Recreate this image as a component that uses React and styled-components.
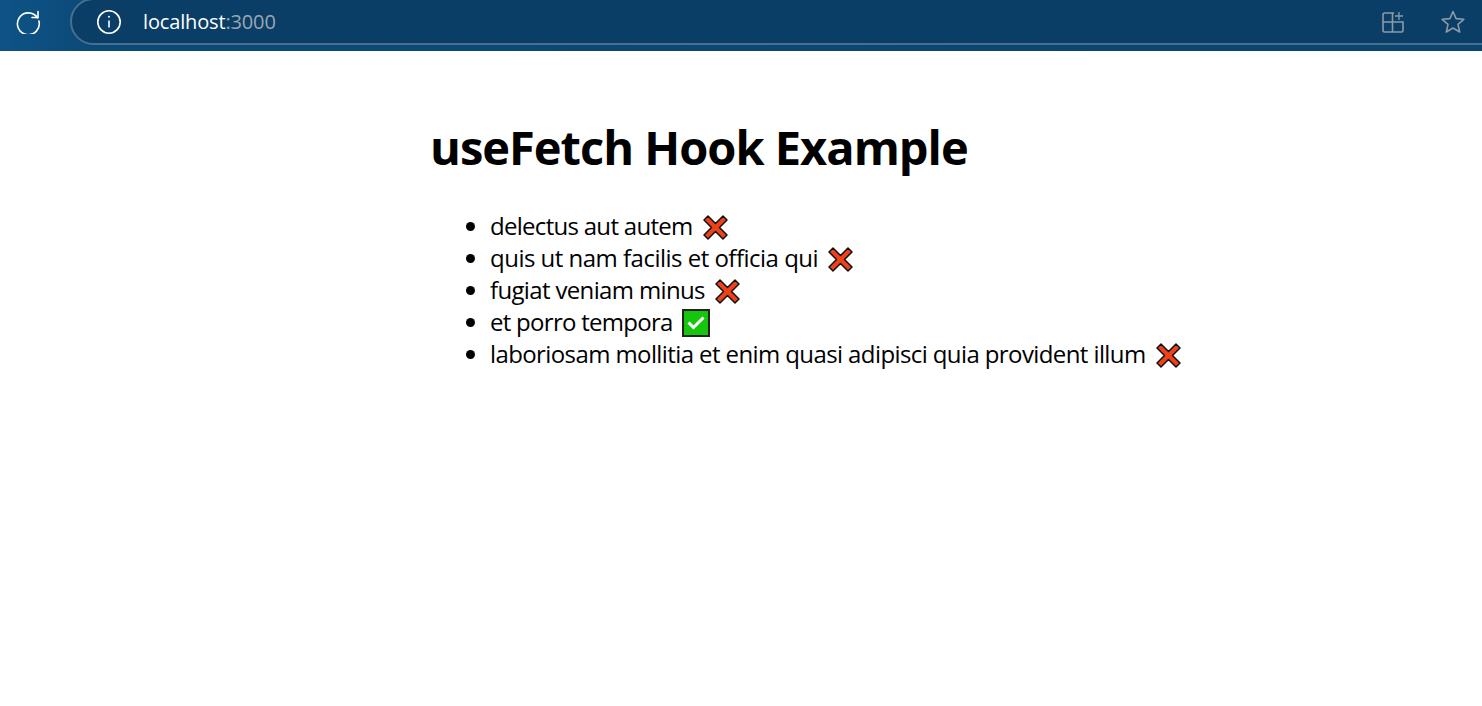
import React from "react";
import styled, { createGlobalStyle } from "styled-components";

const GlobalStyle = createGlobalStyle`
    html, body {
        margin: 0;
        padding: 0;
        background: #fff;
        font-family: "Open Sans", "Noto Sans", sans-serif;
    }
`;

const todos = [
    { title: "delectus aut autem", done: false, tracking: -0.71 },
    { title: "quis ut nam facilis et officia qui", done: false, tracking: -0.51 },
    { title: "fugiat veniam minus", done: false, tracking: -0.65 },
    { title: "et porro tempora", done: true, tracking: -0.72 },
    { title: "laboriosam mollitia et enim quasi adipisci quia provident illum", done: false, tracking: -0.6 },
];

function CrossMark() {
    return (
        <MarkSvg width="25" height="27" viewBox="0 0 25 27">
            <path
                d="M5 2 L12.5 9.5 L20 2 L24 6 L16.5 13.5 L24 21 L20 25 L12.5 17.5 L5 25 L1 21 L8.5 13.5 L1 6 Z"
                fill="#ee4119"
                stroke="#111"
                strokeWidth="1.5"
                strokeLinejoin="round"
            />
        </MarkSvg>
    );
}

function CheckMark() {
    return (
        <MarkSvg $gap={9} width="28" height="28" viewBox="0 0 28 28">
            <rect x="1" y="1" width="26" height="26" fill="#16c60c" stroke="#222" strokeWidth="2" />
            <path d="M6.5 13.5 L11.5 18.5 L21.5 8.5" fill="none" stroke="#fff" strokeWidth="3" />
        </MarkSvg>
    );
}

function App() {
    return (
        <>
            <GlobalStyle />
            <BrowserBar>
                <ReloadButton>
                    <svg width="26" height="26" viewBox="0 0 26 26" fill="none" stroke="#fff" strokeWidth="1.6">
                        <path d="M22.6 10 A10.9 10.9 0 1 0 23.9 13" strokeLinecap="round" />
                        <path d="M23 3.5 V9.5 H17" strokeLinecap="round" strokeLinejoin="round" />
                    </svg>
                </ReloadButton>
                <AddressBar>
                    <InfoIcon>
                        <svg width="26" height="26" viewBox="0 0 26 26" fill="none" stroke="#fff" strokeWidth="1.6">
                            <circle cx="13" cy="13" r="11.2" />
                            <path d="M13 11.5 V18.5" />
                            <circle cx="13" cy="7.8" r="1" fill="#fff" stroke="none" />
                        </svg>
                    </InfoIcon>
                    <Url>
                        localhost<Port>:3000</Port>
                    </Url>
                    <BarActions>
                        <svg width="24" height="24" viewBox="0 0 24 24" fill="none" stroke="#8c9aa6" strokeWidth="1.6">
                            <path d="M13 3 H3.5 A1.5 1.5 0 0 0 2 4.5 V20.5 A1.5 1.5 0 0 0 3.5 22 H20.5 A1.5 1.5 0 0 0 22 20.5 V12 H2 M11.5 3 V22" />
                            <path d="M18 2 V10 M14 6 H22" strokeWidth="1.3" />
                        </svg>
                        <svg width="26" height="26" viewBox="0 0 26 26" fill="none" stroke="#8c9aa6" strokeWidth="1.6" strokeLinejoin="round">
                            <path d="M13 2.5 L16.1 9.6 L23.8 10.3 L18 15.4 L19.7 23 L13 19 L6.3 23 L8 15.4 L2.2 10.3 L9.9 9.6 Z" />
                        </svg>
                    </BarActions>
                </AddressBar>
            </BrowserBar>
            <Main>
                <Title>useFetch Hook Example</Title>
                <TodoList>
                    {todos.map((todo) => (
                        <TodoItem key={todo.title} $tracking={todo.tracking}>
                            {todo.title}
                            {todo.done ? <CheckMark /> : <CrossMark />}
                        </TodoItem>
                    ))}
                </TodoList>
            </Main>
        </>
    );
}

export default App;

const BrowserBar = styled.header`
    display: flex;
    align-items: flex-start;
    height: 51px;
    background: linear-gradient(90deg, #0e5387 0, #0b4a78 90px, #0a4470 100%);
    overflow: hidden;
`;

const ReloadButton = styled.div`
    display: flex;
    align-items: center;
    justify-content: center;
    width: 70px;
    height: 41px;
    padding-right: 14px;
    box-sizing: border-box;
`;

const AddressBar = styled.div`
    display: flex;
    align-items: center;
    flex: 1;
    height: 47px;
    margin-top: -2px;
    margin-right: -30px;
    padding: 0 44px 0 24px;
    box-sizing: border-box;
    background: #0a3e66;
    border: 2px solid #4a6f8c;
    border-radius: 24px;
`;

const InfoIcon = styled.div`
    display: flex;
    margin-right: 21px;
`;

const Url = styled.span`
    font-size: 20px;
    letter-spacing: -0.15px;
    color: #fff;
`;

const Port = styled.span`
    color: #9aa7b2;
`;

const BarActions = styled.div`
    display: flex;
    align-items: center;
    gap: 35px;
    margin-left: auto;
`;

const Main = styled.main`
    width: 800px;
    margin-left: 430px;
`;

const Title = styled.h1`
    margin: 63px 0 0;
    font-size: 47px;
    line-height: 66px;
    font-weight: 700;
    letter-spacing: -1px;
    color: #000;
`;

const TodoList = styled.ul`
    margin: 30px 0 0;
    padding-left: 60px;
`;

const TodoItem = styled.li`
    font-size: 24px;
    line-height: 32px;
    letter-spacing: ${(props) => props.$tracking}px;
    color: #000;
    white-space: nowrap;
`;

const MarkSvg = styled.svg`
    margin-left: ${(props) => props.$gap || 10}px;
    vertical-align: -6px;
`;
